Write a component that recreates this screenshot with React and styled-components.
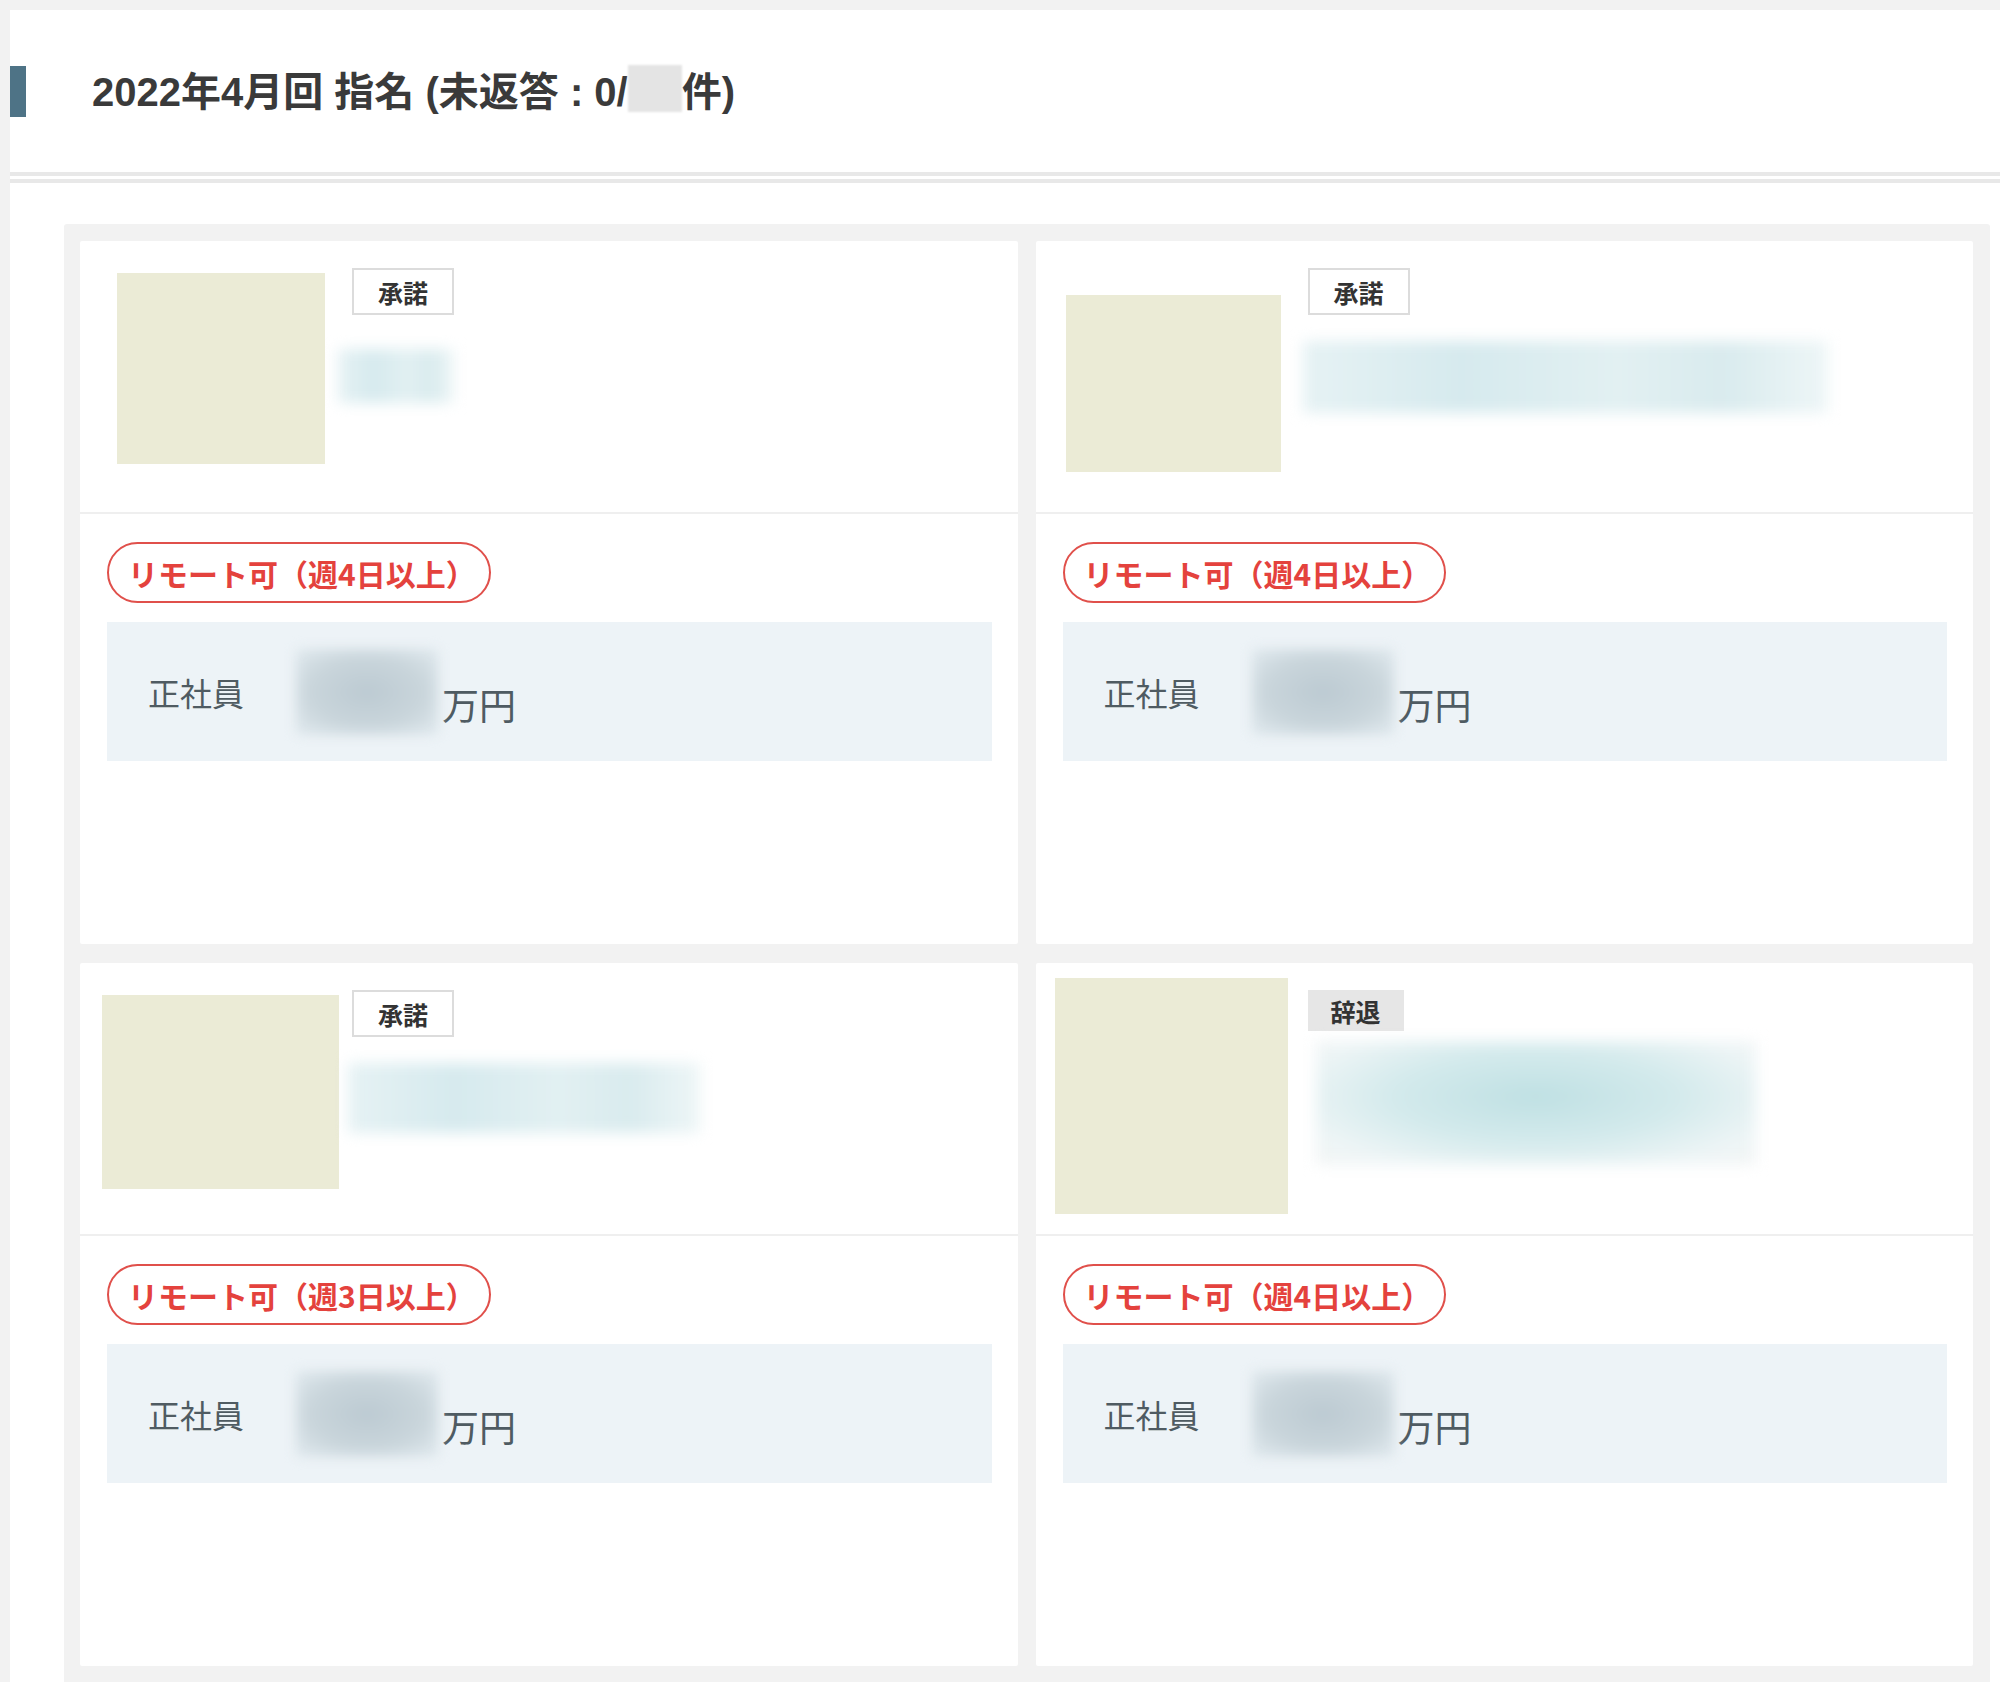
import React from 'react';
import styled, { createGlobalStyle } from 'styled-components'

const GlobalStyle = createGlobalStyle`
  html, body {
    margin: 0;
    padding: 0;
    background-color: #f2f2f2;
  }
  body {
    font-family: "Noto Sans CJK JP", "Noto Sans", sans-serif;
  }
`

const Page = styled.div`
  padding: 10px 0 0 10px;
  background-color: #f2f2f2;
`

const Panel = styled.div`
  background-color: #ffffff;
`

const Header = styled.div`
  display: flex;
  align-items: center;
  height: 162px;
  border-bottom: 4px solid #e8e8e8;
  margin-bottom: 3px;
`

const Accent = styled.div`
  width: 16px;
  height: 51px;
  background-color: #4e7386;
`

const Title = styled.h1`
  margin: -5px 0 0 66px;
  font-family: "Liberation Sans", "Noto Sans CJK JP", sans-serif;
  font-size: 40px;
  font-weight: bold;
  color: #3a3a3a;
  display: flex;
  align-items: center;
`

const Redacted = styled.span`
  display: inline-block;
  width: 54px;
  height: 47px;
  background-color: #e4e4e4;
  filter: blur(1px);
`

const Content = styled.div`
  border-top: 4px solid #e8e8e8;
  padding: 41px 10px 0 54px;
`

const Grid = styled.div`
  display: grid;
  grid-template-columns: 1fr 1fr;
  gap: 19px 18px;
  padding: 17px 17px 16px 16px;
  background-color: #f2f2f2;
  border-radius: 3px 3px 0 0;
`

const Card = styled.div`
  background-color: #ffffff;
  height: 703px;
  border-radius: 2px;
  display: flex;
  flex-direction: column;
`

const Top = styled.div`
  display: flex;
  height: 271px;
  border-bottom: 2px solid #efefef;
`

const ImageCol = styled.div`
  width: 264px;
  display: flex;
  align-items: flex-start;
`

const Photo = styled.div`
  width: ${p => p.$w}px;
  height: ${p => p.$h}px;
  margin: ${p => p.$top}px 0 0 ${p => p.$left}px;
  background-color: #ebebd6;
`

const Info = styled.div`
  margin-left: 8px;
  padding-top: 27px;
  display: flex;
  flex-direction: column;
  align-items: flex-start;
`

const Status = styled.span`
  box-sizing: border-box;
  display: inline-flex;
  align-items: center;
  justify-content: center;
  width: ${p => (p.$declined ? 96 : 102)}px;
  height: ${p => (p.$declined ? 41 : 47)}px;
  font-size: 25px;
  font-weight: bold;
  color: #333333;
  background-color: ${p => (p.$declined ? '#e6e6e6' : '#ffffff')};
  border: ${p => (p.$declined ? 'none' : '2px solid #dcdcdc')};
`

const NameBlur = styled.div`
  width: ${p => p.$w}px;
  height: ${p => p.$h}px;
  margin-top: ${p => p.$top}px;
  margin-left: ${p => p.$left}px;
  background: ${p => p.$bg};
  filter: blur(7px);
`

const Bottom = styled.div`
  padding: 28px 26px 0 27px;
  display: flex;
  flex-direction: column;
  align-items: flex-start;
`

const Remote = styled.span`
  box-sizing: border-box;
  display: inline-flex;
  align-items: center;
  height: 61px;
  padding: 0 13px 0 19px;
  border: 2px solid #e0504b;
  border-radius: 31px;
  color: #e4423d;
  font-size: 30px;
  font-weight: bold;
`

const Salary = styled.div`
  align-self: stretch;
  margin-top: 19px;
  height: 139px;
  background-color: #edf3f7;
  display: flex;
  align-items: center;
  padding-left: 41px;
`

const Label = styled.span`
  font-size: 32px;
  color: #4f5b62;
  width: 98px;
`

const AmountBlur = styled.div`
  width: 142px;
  height: 86px;
  margin-left: 50px;
  background: radial-gradient(ellipse at 50% 50%, #bccad2 0%, #c9d5db 55%, #e0e9ee 100%);
  filter: blur(6px);
`

const Unit = styled.span`
  font-size: 37px;
  color: #4f5b62;
  margin-left: 4px;
  margin-top: 24px;
`

const tealSoft = 'linear-gradient(90deg, #e6f2f4 0%, #d6eaee 30%, #e2f0f2 60%, #d9ebee 80%, #eef6f7 100%)'
const tealStrong = 'radial-gradient(ellipse at 50% 45%, #bfe0e3 0%, #d3eaec 45%, #eef5f6 80%, #f3f5f5 100%)'

const cards = [
  { status: '承諾', remote: 'リモート可（週4日以上）', photo: { w: 208, h: 191, top: 32, left: 37 }, name: { w: 116, h: 54, top: 34, left: -14, bg: tealSoft } },
  { status: '承諾', remote: 'リモート可（週4日以上）', photo: { w: 215, h: 177, top: 54, left: 30 }, name: { w: 525, h: 72, top: 26, left: -5, bg: tealSoft } },
  { status: '承諾', remote: 'リモート可（週3日以上）', photo: { w: 237, h: 194, top: 32, left: 22 }, name: { w: 352, h: 70, top: 26, left: -4, bg: tealSoft } },
  { status: '辞退', remote: 'リモート可（週4日以上）', photo: { w: 233, h: 236, top: 15, left: 19 }, name: { w: 440, h: 124, top: 10, left: 8, bg: tealStrong } },
]

const OfferCard = ({ item }) => (
  <Card>
    <Top>
      <ImageCol>
        <Photo $w={item.photo.w} $h={item.photo.h} $top={item.photo.top} $left={item.photo.left} />
      </ImageCol>
      <Info>
        <Status $declined={item.status === '辞退'}>{item.status}</Status>
        <NameBlur $w={item.name.w} $h={item.name.h} $top={item.name.top} $left={item.name.left} $bg={item.name.bg} />
      </Info>
    </Top>
    <Bottom>
      <Remote>{item.remote}</Remote>
      <Salary>
        <Label>正社員</Label>
        <AmountBlur />
        <Unit>万円</Unit>
      </Salary>
    </Bottom>
  </Card>
)

const App = () => (
  <Page>
    <GlobalStyle />
    <Panel>
      <Header>
        <Accent />
        <Title>
          2022年4月回 指名 (未返答 : 0/<Redacted />件)
        </Title>
      </Header>
      <Content>
        <Grid>
          {cards.map((item, i) => (
            <OfferCard key={i} item={item} />
          ))}
        </Grid>
      </Content>
    </Panel>
  </Page>
)

export default App;
